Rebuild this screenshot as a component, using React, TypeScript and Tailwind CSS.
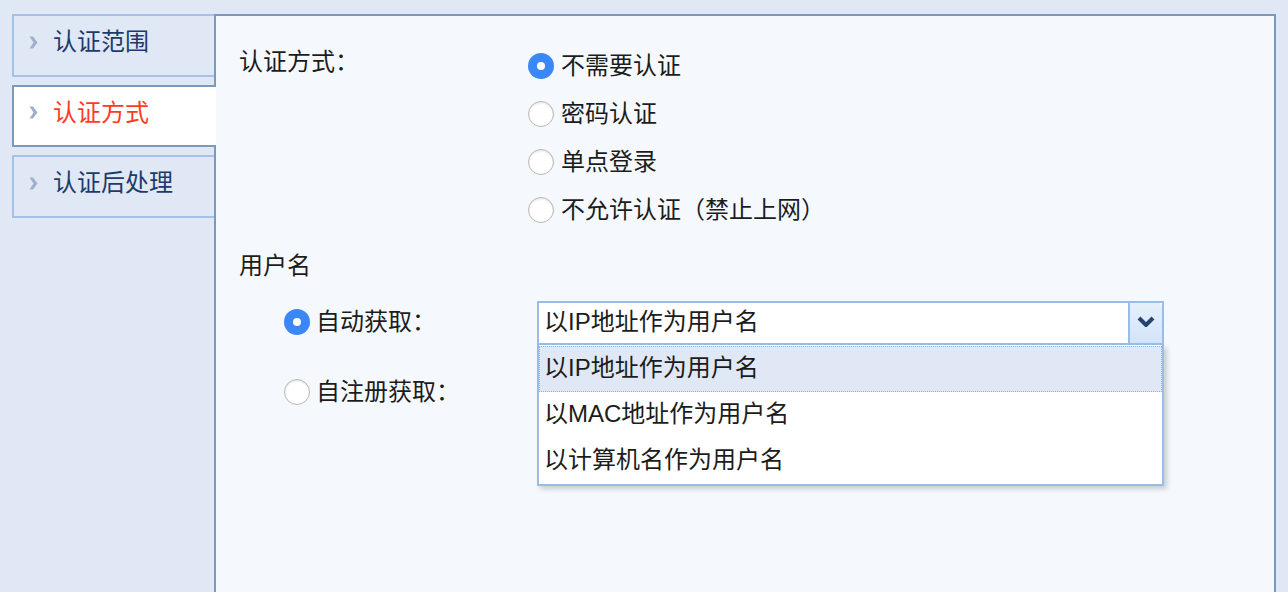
const font = { fontFamily: '"Liberation Sans", "Noto Sans CJK SC", sans-serif' }

const tabs = [
  { label: '认证范围', active: false },
  { label: '认证方式', active: true },
  { label: '认证后处理', active: false },
]

const modes = ['不需要认证', '密码认证', '单点登录', '不允许认证（禁止上网）']
const options = ['以IP地址作为用户名', '以MAC地址作为用户名', '以计算机名作为用户名']

function Radio({ checked }: { checked?: boolean }) {
  if (checked) {
    return (
      <span className="w-[26px] h-[26px] rounded-full bg-[#3b87f5] flex items-center justify-center shrink-0">
        <span className="w-[8px] h-[8px] rounded-full bg-white" />
      </span>
    )
  }
  return (
    <span className="w-[26px] h-[26px] rounded-full bg-white border border-[#b8b8b8] shadow-[inset_0_1px_2px_rgba(0,0,0,0.12)] shrink-0" />
  )
}

function Arrow() {
  return (
    <svg width="9" height="13" viewBox="0 0 9 13" className="shrink-0">
      <path d="M0.5 0.5 L4 0.5 L8.5 6.5 L4 12.5 L0.5 12.5 L4.5 6.5 Z" fill="#9fb1c9" />
    </svg>
  )
}

export default function App() {
  return (
    <div className="w-[1288px] h-[592px] bg-[#dfe8f4] flex pt-[14px] pl-[12px] overflow-hidden text-[24px] text-[#1c1c1c]" style={font}>
      {/* Onglets */}
      <div className="w-[202px] flex flex-col gap-[8px] shrink-0">
        {tabs.map(t => (
          t.active ? (
            <div key={t.label} className="relative z-10 -mr-[2px] h-[62px] bg-white border-2 border-r-0 border-[#7b98bd] flex items-center gap-[15px] pl-[15px] pb-[7px]">
              <Arrow />
              <span className="text-[#ff3b1e]">{t.label}</span>
            </div>
          ) : (
            <div key={t.label} className="h-[63px] bg-[#dfe8f4] border-2 border-r-0 border-[#a4c2e8] flex items-center gap-[15px] pl-[15px] pb-[7px]">
              <Arrow />
              <span className="text-[#1e3a6c]">{t.label}</span>
            </div>
          )
        ))}
      </div>

      {/* Panneau */}
      <div className="w-[1062px] h-[600px] bg-[#f5f9fd] border-2 border-b-0 border-[#7b98bd] pl-[23px] pt-[26px]">
        <div className="flex">
          <div className="w-[289px] pt-[2px] leading-[36px]">认证方式：</div>
          <div className="flex flex-col">
            {modes.map((m, i) => (
              <label key={m} className="h-[48px] flex items-center gap-[7px]">
                <Radio checked={i === 0} />
                <span>{m}</span>
              </label>
            ))}
          </div>
        </div>

        <div className="mt-[14px] leading-[36px]">用户名</div>

        <div className="mt-[17px] pl-[45px] flex flex-col gap-[26px]">
          <div className="flex items-center h-[44px]">
            <label className="w-[253px] flex items-center gap-[6px] pb-[2px]">
              <Radio checked />
              <span>自动获取：</span>
            </label>
            <div className="relative">
              <div className="w-[627px] h-[44px] bg-white border-2 border-[#99bde8] flex">
                <div className="flex-1 flex items-center pl-[5px] pb-[2px]">以IP地址作为用户名</div>
                <div className="w-[34px] border-l-2 border-[#99bde8] bg-gradient-to-b from-[#e6f0fc] to-[#d3e4f9] rounded-tr-[4px] flex items-center justify-center pb-[3px]">
                  <svg width="18" height="11" viewBox="0 0 18 11">
                    <path d="M2 2 L9 9 L16 2" stroke="#27446f" strokeWidth="4" fill="none" />
                  </svg>
                </div>
              </div>
              {/* Liste déroulante */}
              <div className="absolute z-20 left-0 top-[44px] w-[627px] bg-white border-2 border-t-0 border-[#99bde8] shadow-[3px_3px_5px_rgba(0,0,0,0.18)]">
                {options.map((o, i) => (
                  <div
                    key={o}
                    className={
                      i === 0
                        ? 'h-[46px] flex items-center pl-[4px] pb-[2px] bg-[#dfe8f4] border border-dotted border-[#8fb2e3] mt-[1px]'
                        : 'h-[46px] flex items-center pl-[5px] pb-[2px]'
                    }
                  >
                    {o}
                  </div>
                ))}
              </div>
            </div>
          </div>
          <label className="h-[44px] flex items-center gap-[6px] pb-[2px]">
            <Radio />
            <span>自注册获取：</span>
          </label>
        </div>
      </div>
    </div>
  )
}
